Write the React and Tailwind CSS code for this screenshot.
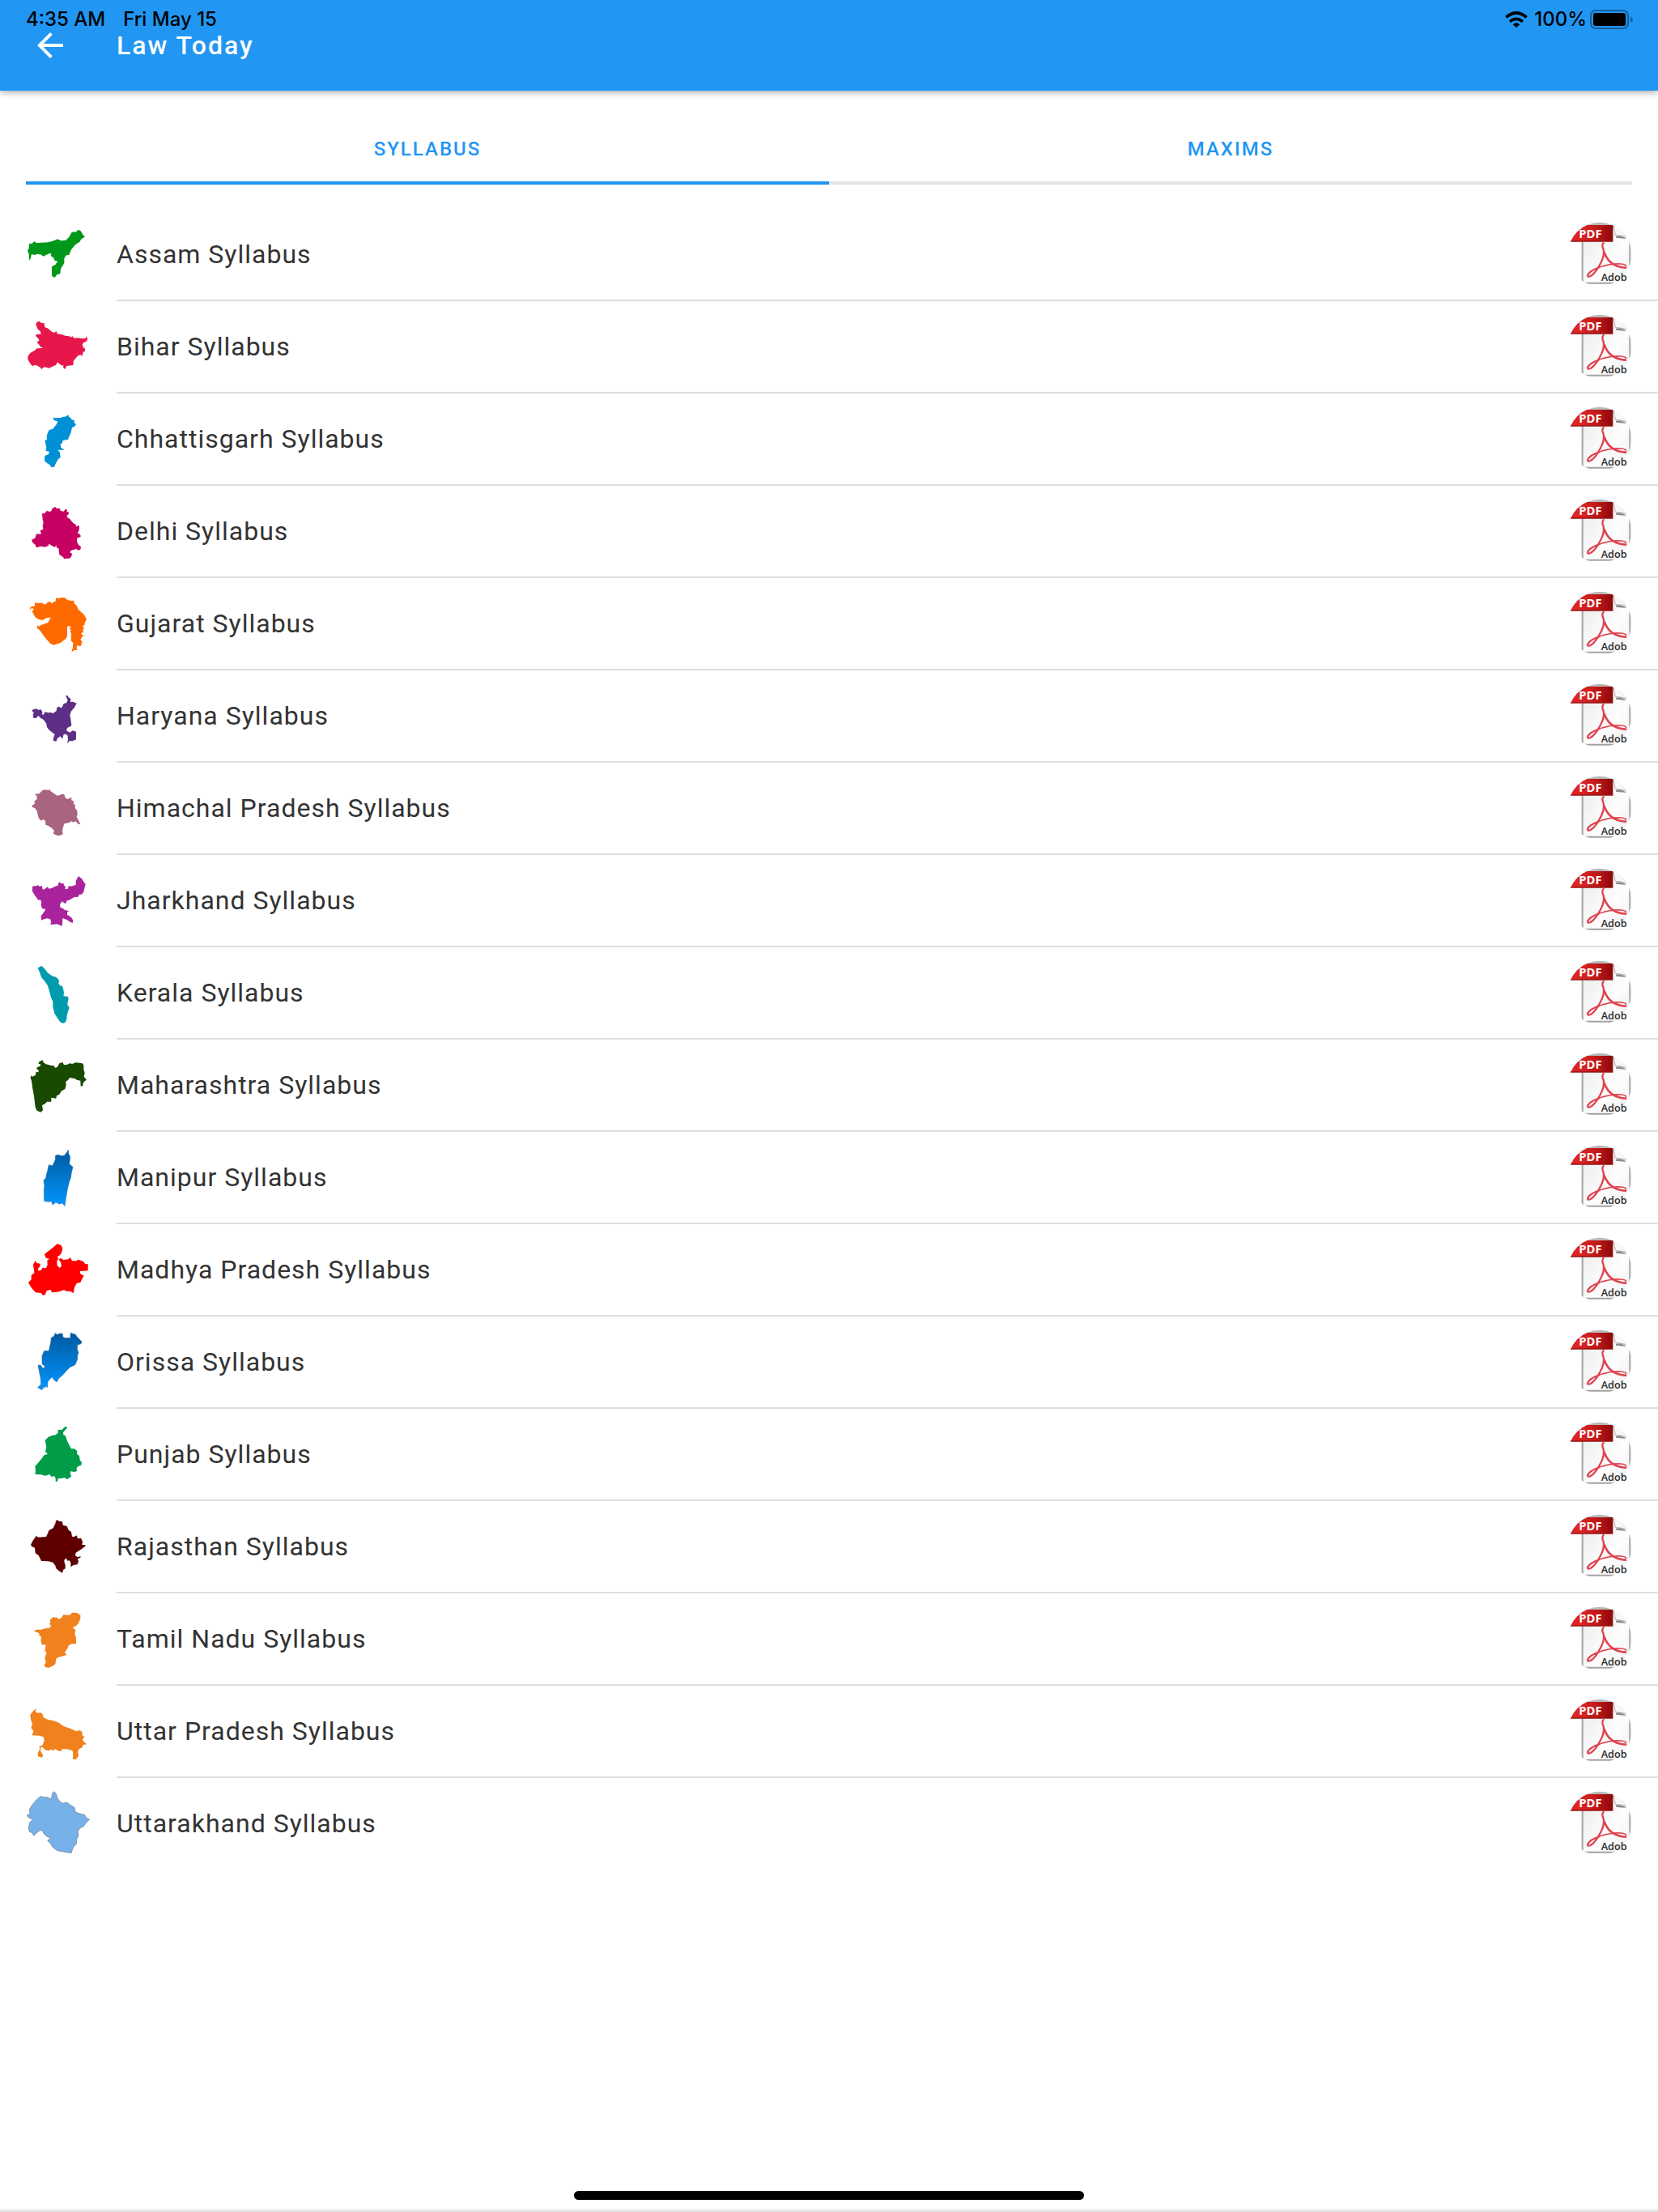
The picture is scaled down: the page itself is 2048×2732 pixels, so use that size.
import { MdArrowBack } from 'react-icons/md'

const states = [
  {
    name: 'Assam',
    color: '#00971a',
    viewBox: '96 42 240 240',
    points:
      '102,147 107,141 108,123 119,122 127,114 135,120 180,118 181,113 184,117 203,110 213,106 226,112 244,110 256,98 266,80 282,79 291,71 299,76 308,91 315,97 299,108 297,115 279,127 263,146 256,165 245,166 238,178 238,195 225,216 223,235 212,236 203,248 192,243 192,208 205,201 214,188 203,186 198,174 188,169 190,159 181,160 160,170 151,163 137,161 130,165 117,162 113,179 109,185 107,162',
  },
  {
    name: 'Bihar',
    color: '#e8174b',
    viewBox: '96 384 240 240',
    points:
      '133,422 137,413 146,410 152,416 164,418 166,433 176,436 186,444 194,451 203,452 208,446 212,457 228,459 242,464 257,466 264,470 268,465 274,473 288,472 304,474 316,474 322,466 324,479 319,486 310,489 305,497 308,506 315,512 315,521 308,524 305,540 299,535 289,538 282,546 273,556 271,573 247,576 241,588 234,581 235,574 227,574 213,562 207,573 197,577 182,584 172,581 163,580 154,588 149,581 133,572 119,576 110,564 103,551 104,539 112,528 128,519 137,511 159,510 150,505 146,499 136,487 145,483 143,475 132,465 135,458 151,458 151,450 139,438',
  },
  {
    name: 'Chhattisgarh',
    color: '#0090d6',
    viewBox: '96 726 240 240',
    points:
      '198,766 204,769 225,768 232,765 246,763 252,756 256,766 263,768 266,776 276,776 275,786 282,793 276,800 267,804 263,823 255,839 253,848 243,850 232,853 231,862 224,865 226,879 236,884 236,887 214,887 222,896 224,916 216,920 204,942 201,950 191,951 183,941 170,933 165,926 166,909 181,902 182,893 169,890 172,878 166,852 174,850 173,834 182,813 196,809 209,793 214,781 199,777',
  },
  {
    name: 'Delhi',
    color: '#c70063',
    viewBox: '96 48 240 240',
    points:
      '156,103 166,102 172,93 186,96 192,91 193,84 205,78 209,83 222,84 224,92 236,95 242,87 248,88 248,96 256,99 254,105 248,110 249,117 258,122 271,138 281,144 284,152 289,147 294,149 293,165 287,176 294,178 300,187 294,191 285,194 286,209 291,219 300,226 298,236 290,239 282,234 263,240 259,247 267,251 265,261 258,269 246,269 237,271 234,264 220,255 217,231 211,231 209,223 201,227 181,215 179,223 164,227 154,224 134,229 132,220 121,210 117,201 131,193 133,182 138,178 151,179 153,174 149,170 150,165 160,161 158,148 161,136 158,125',
  },
  {
    name: 'Gujarat',
    color: '#ff6a00',
    viewBox: '96 390 240 240',
    points:
      '111,460 112,451 118,447 128,446 130,431 133,434 158,434 164,440 174,436 176,431 187,429 190,436 206,427 208,415 218,417 227,414 241,415 244,420 252,422 257,425 271,426 275,424 274,435 285,445 289,457 300,467 312,478 321,495 314,508 313,517 306,519 312,529 307,533 309,542 300,547 306,554 317,554 306,557 298,570 304,577 300,593 292,595 288,589 283,600 287,609 276,608 271,613 265,614 270,600 271,582 263,574 264,546 258,540 264,536 257,528 265,523 253,519 249,524 249,557 243,568 224,582 199,590 187,585 165,560 147,535 138,528 137,515 142,521 161,512 177,508 188,488 174,489 157,498 141,494 130,486 119,466 126,457 117,453',
  },
  {
    name: 'Haryana',
    color: '#5d2f86',
    viewBox: '96 732 240 240',
    points:
      '118,834 122,829 135,826 141,830 152,829 157,838 156,848 163,847 166,838 179,841 192,840 196,844 209,834 211,821 219,818 226,824 233,815 236,807 246,805 251,794 243,777 251,778 254,784 262,789 261,801 270,800 284,806 275,823 264,835 259,850 262,865 265,889 257,893 249,897 246,907 259,914 269,907 282,911 282,940 269,946 258,945 249,955 252,942 251,926 245,920 236,921 231,938 224,928 213,935 208,947 197,944 199,931 203,921 188,910 181,904 174,894 172,881 161,866 150,860 142,852 132,862 124,860 122,852 125,840',
  },
  {
    name: 'Himachal Pradesh',
    color: '#a9647f',
    viewBox: '96 24 240 240',
    points:
      '118,135 129,128 127,119 137,111 136,99 129,92 145,91 157,79 165,76 181,78 184,73 186,80 212,98 224,95 232,91 239,96 242,106 250,111 262,106 266,104 264,115 272,118 274,131 279,132 278,144 286,154 287,167 284,176 292,192 298,205 290,203 280,193 272,197 264,193 257,198 238,202 235,212 231,224 233,241 219,247 205,243 197,238 201,228 192,218 178,209 169,206 168,191 160,186 152,191 144,182 136,153 129,144 120,141',
  },
  {
    name: 'Jharkhand',
    color: '#a9249c',
    viewBox: '96 366 240 240',
    points:
      '120,434 137,432 143,429 144,434 156,433 157,443 163,446 176,436 182,443 193,440 205,434 214,431 219,418 227,424 235,423 238,431 243,437 241,445 252,443 254,433 263,434 273,431 281,429 281,415 287,402 292,397 303,406 312,420 317,426 313,442 309,457 301,464 294,464 289,474 278,473 266,479 257,485 248,487 243,499 237,495 231,490 223,499 223,512 232,515 240,522 255,525 249,531 249,539 264,549 271,560 269,570 260,566 248,558 232,552 231,575 227,582 221,577 210,574 200,575 186,575 190,566 186,555 174,553 158,557 153,560 152,544 164,528 169,519 156,516 153,507 153,490 149,484 142,485 130,469 120,453',
  },
  {
    name: 'Kerala',
    color: '#009cad',
    viewBox: '96 708 240 240',
    points:
      '140,737 147,732 154,729 163,737 169,744 178,756 188,762 194,767 204,769 216,777 219,787 217,794 224,803 231,803 235,817 237,830 235,841 251,842 254,850 251,863 250,873 257,884 253,895 248,911 247,926 242,938 234,942 223,937 212,921 202,905 196,881 196,861 188,843 181,815 176,800 163,782 153,771 147,752',
  },
  {
    name: 'Maharashtra',
    color: '#194a02',
    viewBox: '96 30 240 240',
    points:
      '113,124 115,115 120,119 132,113 134,101 143,103 143,96 135,89 139,83 149,81 150,73 142,71 145,64 158,58 161,67 170,73 189,78 200,79 204,87 213,83 220,70 232,66 237,76 250,74 258,70 268,72 280,67 305,70 310,76 310,93 314,105 311,119 321,131 314,136 308,143 307,154 299,155 298,134 284,131 279,127 258,123 252,132 244,137 245,152 241,165 227,173 220,185 210,190 208,200 190,197 190,212 174,212 165,221 156,225 159,243 151,251 137,245 131,233 126,191 121,164 117,135',
  },
  {
    name: 'Manipur',
    gradient: true,
    viewBox: '96 372 240 240',
    points:
      '205,412 216,409 227,413 239,411 246,402 253,391 254,404 260,417 257,443 270,454 265,474 262,494 256,510 250,535 245,564 240,598 230,588 219,591 207,584 196,594 190,581 178,583 164,580 163,534 165,524 162,503 170,495 172,482 176,469 181,446 194,449 200,438 205,427',
  },
  {
    name: 'Madhya Pradesh',
    color: '#ff0000',
    viewBox: '96 714 240 240',
    points:
      '105,882 116,871 116,855 127,847 126,836 123,815 131,801 136,810 149,812 148,823 141,830 142,839 152,836 158,827 171,828 176,816 175,800 183,794 170,791 165,777 176,768 193,755 212,739 226,743 232,755 229,769 222,781 213,786 217,794 211,802 212,819 221,828 228,821 225,808 218,797 225,791 234,798 253,796 261,789 267,802 282,802 290,797 309,804 316,814 326,813 326,838 309,839 297,840 297,849 311,857 304,869 298,882 284,885 276,900 272,922 261,914 249,915 237,910 222,915 209,917 191,919 189,909 173,912 167,928 158,929 153,921 132,919 120,906 113,896',
  },
  {
    name: 'Orissa',
    gradient: true,
    viewBox: '96 21 240 240',
    points:
      '190,52 199,47 205,35 211,40 223,36 231,36 233,49 243,53 253,52 260,54 262,34 280,40 287,50 303,66 300,74 287,78 286,95 291,106 287,118 287,131 278,152 259,161 247,173 233,189 217,203 211,215 202,210 193,197 186,205 177,213 176,235 167,232 162,240 160,228 156,245 140,236 152,224 151,204 147,184 141,154 150,153 157,163 166,165 165,156 156,149 156,119 164,100 181,101 184,86 188,70',
  },
  {
    name: 'Punjab',
    color: '#009c48',
    viewBox: '96 363 240 240',
    points:
      '130,528 144,512 156,497 163,487 177,482 168,475 172,456 167,431 180,419 195,413 206,412 216,403 214,393 230,392 242,380 250,385 244,391 234,403 235,412 242,414 249,434 259,454 264,463 276,463 286,472 285,482 294,490 296,505 303,514 301,524 291,527 284,533 285,545 277,549 261,547 261,558 265,565 257,571 249,576 238,570 228,573 215,573 213,584 206,584 206,572 200,563 192,568 183,558 168,563 152,559 130,557 132,545',
  },
  {
    name: 'Rajasthan',
    color: '#5e0000',
    viewBox: '96 705 240 240',
    points:
      '114,820 120,806 126,798 134,786 142,791 171,789 177,776 181,766 197,757 205,740 207,730 213,727 219,732 231,733 233,746 248,750 254,764 264,771 267,788 275,789 284,784 288,796 300,794 306,807 304,819 316,819 316,824 302,835 281,848 279,859 287,864 299,862 298,867 287,871 291,878 287,892 272,894 262,901 262,885 257,877 249,878 247,869 239,874 238,881 242,893 242,907 234,912 231,923 221,917 208,907 205,896 196,884 179,880 153,879 143,858 131,850 129,830 118,825',
  },
  {
    name: 'Tamil Nadu',
    color: '#f0811d',
    viewBox: '96 12 240 240',
    points:
      '127,101 138,98 152,98 167,94 183,92 190,84 182,77 187,73 185,62 196,52 212,54 219,60 228,54 235,43 251,45 263,42 266,35 285,36 298,44 298,58 291,74 283,83 269,91 280,100 277,113 282,128 282,151 265,151 255,156 248,171 240,182 247,192 237,195 216,201 208,206 205,226 193,234 178,240 163,234 170,219 166,202 173,183 166,177 170,155 154,153 151,136 153,125 145,119 145,111 128,105',
  },
  {
    name: 'Uttar Pradesh',
    color: '#f0811d',
    viewBox: '96 354 240 240',
    points:
      '112,413 121,402 134,390 131,402 140,407 150,405 160,414 159,422 178,432 192,434 206,438 218,443 237,457 260,464 283,475 296,471 304,477 306,492 314,495 306,503 308,511 322,523 307,525 305,534 291,542 289,552 291,567 280,580 269,577 271,566 270,548 258,543 244,541 231,540 226,549 216,547 203,540 199,547 189,542 181,547 168,544 158,534 150,535 151,549 160,565 155,572 141,568 140,556 147,542 146,530 157,527 164,510 161,496 145,491 119,490 124,473 115,462 120,449 114,431',
  },
  {
    name: 'Uttarakhand',
    color: '#77b1e9',
    outline: '#66788a',
    viewBox: '96 696 240 240',
    points:
      '100,787 111,779 109,765 118,749 134,730 152,715 160,719 176,719 190,727 194,705 200,698 207,705 213,723 222,735 233,742 247,738 258,746 277,758 279,774 298,781 313,784 323,799 332,801 317,816 311,826 296,834 288,847 291,861 284,875 283,892 271,905 264,926 251,924 230,920 212,917 195,904 187,890 176,880 188,870 174,865 163,855 158,844 149,842 139,849 125,862 120,851 109,847 106,831 110,813 122,801 106,795',
  },
]

const StateMap = ({ state }) => (
  <svg viewBox={state.viewBox} className="mb-0.5 h-20 w-20 shrink-0" aria-hidden="true">
    <polygon
      points={state.points}
      fill={state.gradient ? 'url(#blueFade)' : state.color}
      stroke={state.outline || (state.gradient ? '#2a6fae' : 'none')}
      strokeWidth="2"
      strokeLinejoin="round"
    />
  </svg>
)

const PdfIcon = () => (
  <svg viewBox="0 0 240 240" className="h-20 w-20 shrink-0" aria-hidden="true">
    <g clipPath="url(#pdfCircle)">
      <path d="M56 20h119l57 38v159q0 10-10 10H66q-10 0-10-10z" fill="url(#pdfPage)" stroke="#a3a3a3" strokeWidth="6" />
      <path d="M168 3h22l46 58-9-3q-20-7-49-9z" fill="#f8f8f8" stroke="#b5b5b5" strokeWidth="3" />
      <path d="M180 53q22-5 38 10l-38-4z" fill="#8c8c8c" />
      <path d="M0 0h180v15H0z" fill="#b9b9b9" />
      <path d="M0 12h169v60H0z" fill="url(#pdfBand)" />
      <path d="M0 72h169" stroke="#991515" strokeWidth="4" />
      <g fill="none" stroke="#e04350" strokeLinecap="round" strokeLinejoin="round">
        <path d="M134 78q-8 9 0 24 5 24-12 54-18 35-36 45-14 5-10-5 7-15 44-28" strokeWidth="7" />
        <path d="M137 114q12 31 34 43 17 11 45 13" strokeWidth="8" />
        <path d="M126 166q38-13 74-10 16 2 18 7" strokeWidth="5" />
      </g>
    </g>
    <text x="43" y="60" fontSize="44" fontWeight="700" fill="#fff" className="font-['Open_Sans',sans-serif]">
      PDF
    </text>
    <text x="125" y="218" fontSize="38" fontWeight="600" fill="#2e2e2e" className="font-['Open_Sans',sans-serif]">
      Adob
    </text>
  </svg>
)

const SharedDefs = () => (
  <svg className="absolute h-0 w-0" aria-hidden="true">
    <defs>
      <linearGradient id="blueFade" x1="0" y1="0" x2="0" y2="1">
        <stop offset="0" stopColor="#005a9e" />
        <stop offset="1" stopColor="#0095ff" />
      </linearGradient>
      <linearGradient id="pdfPage" x1="0" y1="0" x2="1" y2="1">
        <stop offset="0" stopColor="#e9eaea" />
        <stop offset="0.6" stopColor="#fdfdfd" />
        <stop offset="1" stopColor="#eeeeee" />
      </linearGradient>
      <linearGradient id="pdfBand" x1="0" y1="0" x2="1" y2="0">
        <stop offset="0.3" stopColor="#dd2424" />
        <stop offset="0.65" stopColor="#c01818" />
        <stop offset="1" stopColor="#8b0808" />
      </linearGradient>
      <clipPath id="pdfCircle">
        <circle cx="120" cy="120" r="118" />
      </clipPath>
    </defs>
  </svg>
)

const StatusBar = () => (
  <div className="absolute inset-x-0 top-0 flex h-12 items-center justify-between pr-[30px] pl-8 font-[Inter,sans-serif] text-2xl font-medium text-black">
    <div className="flex gap-[22px]">
      <span>4:35 AM</span>
      <span>Fri May 15</span>
    </div>
    <div className="flex items-center gap-1">
      <svg viewBox="0 0 84 60" className="mr-1 h-5 w-7" aria-hidden="true">
        <g fill="none" stroke="#000" strokeWidth="11">
          <path d="M4 22Q42-10 80 22" />
          <path d="M18 38q24-20 48 0" />
        </g>
        <path d="M29 49q13-12 26 0L42 60z" />
      </svg>
      <span>100%</span>
      <svg viewBox="0 0 54 24" className="h-6 w-[54px]" aria-hidden="true">
        <rect x="1" y="1" width="46" height="22" rx="6" fill="none" stroke="#155f9c" strokeWidth="2" />
        <rect x="4" y="4" width="40" height="16" rx="3" />
        <path d="M50 8q6 4 0 8z" fill="#155f9c" />
      </svg>
    </div>
  </div>
)

const App = () => {
  return (
    <div className="flex min-h-screen flex-col bg-white font-[Roboto,sans-serif]">
      <SharedDefs />
      <header className="relative z-10 bg-[#2196f3] shadow-[0_2px_8px_rgba(0,0,0,0.35)]">
        <StatusBar />
        <div className="flex h-28 items-center gap-[58px] pl-[38px]">
          <button type="button" aria-label="Back" className="relative text-white">
            <MdArrowBack className="h-12 w-12" />
          </button>
          <h1 className="relative text-[32px] font-medium tracking-[2px] text-white">Law Today</h1>
        </div>
      </header>

      <div role="tablist" className="mx-8 mt-8 flex h-[84px] font-medium text-[#2196f3]">
        <button
          type="button"
          role="tab"
          aria-selected="true"
          className="flex-1 border-b-4 border-[#2196f3] text-2xl tracking-[2px]"
        >
          SYLLABUS
        </button>
        <button
          type="button"
          role="tab"
          aria-selected="false"
          className="flex-1 border-b-4 border-[#e4e4e4] text-2xl tracking-[2px]"
        >
          MAXIMS
        </button>
      </div>

      <ul className="mt-[30px] flex-1">
        {states.map((state) => (
          <li key={state.name} className="group">
            <a href="#" className="flex items-center gap-8 pl-8">
              <StateMap state={state} />
              <div className="flex h-[114px] flex-1 items-center justify-between border-b-2 border-[#dedede] pr-8 group-last:border-transparent">
                <span className="text-[32px] tracking-[1px] text-[#333]">{state.name} Syllabus</span>
                <PdfIcon />
              </div>
            </a>
          </li>
        ))}
      </ul>

      <footer>
        <div className="mx-auto mb-[11px] h-[11px] w-[630px] rounded-full bg-black" />
        <div className="h-1 bg-linear-to-b from-[#f7f7f7] to-[#dcdcdc]" />
      </footer>
    </div>
  )
}

export default App
